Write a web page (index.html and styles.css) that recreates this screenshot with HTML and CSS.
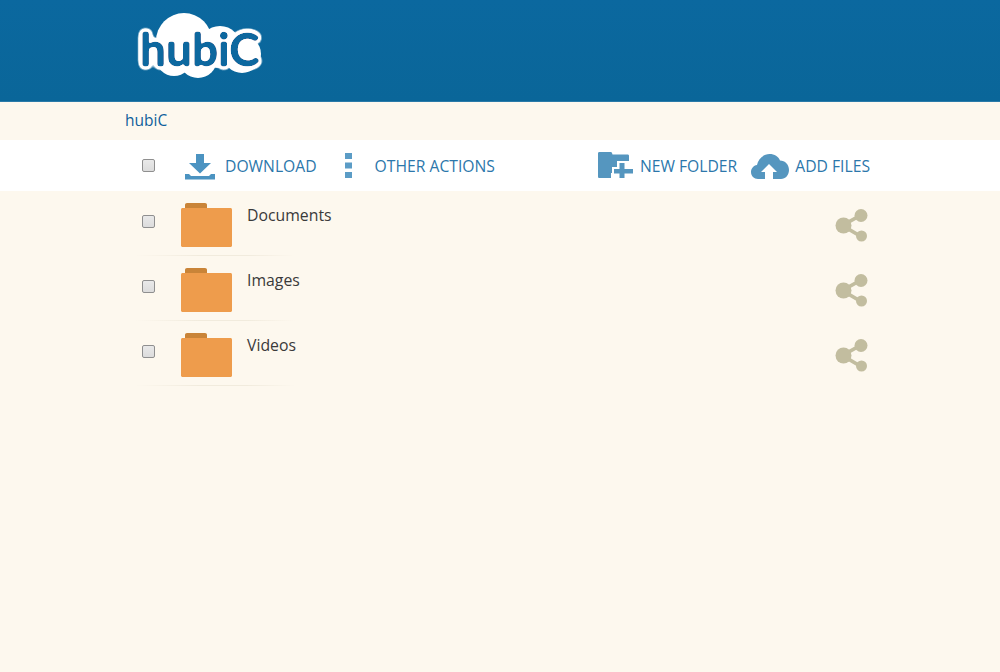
FILE: index.html
```html
<!DOCTYPE html>
<html lang="en">
<head>
    <meta charset="UTF-8">
    <title>hubiC</title>
    <link rel="stylesheet" href="styles.css">
</head>
<body>

<header class="top-bar">
    <div class="logo">
        <svg class="logo-art" width="130" height="70" viewBox="0 0 130 70">
            <defs>
                <filter id="logo-round" x="-10%" y="-30%" width="120%" height="160%">
                    <feGaussianBlur in="SourceAlpha" stdDeviation="1.2" result="soft"/>
                    <feComponentTransfer in="soft" result="core">
                        <feFuncA type="linear" slope="4" intercept="-1"/>
                    </feComponentTransfer>
                    <feGaussianBlur in="SourceAlpha" stdDeviation="3" result="wide-soft"/>
                    <feComponentTransfer in="wide-soft" result="halo">
                        <feFuncA type="linear" slope="16" intercept="-.6"/>
                    </feComponentTransfer>
                    <feFlood flood-color="#ffffff"/>
                    <feComposite in2="halo" operator="in" result="white"/>
                    <feFlood flood-color="#0c689f"/>
                    <feComposite in2="core" operator="in" result="blue"/>
                    <feMerge>
                        <feMergeNode in="white"/>
                        <feMergeNode in="blue"/>
                    </feMerge>
                </filter>
            </defs>
            <g fill="#fff">
                <circle cx="48" cy="30" r="28"/>
                <circle cx="84" cy="36" r="21"/>
                <circle cx="106" cy="43" r="19"/>
                <circle cx="62" cy="48" r="19"/>
                <circle cx="38" cy="47" r="18"/>
            </g>
            <text class="logo-text" x="4" y="55" filter="url(#logo-round)">hubiC</text>
        </svg>
    </div>
</header>

<div class="container breadcrumb">hubiC</div>

<div class="toolbar-band">
    <div class="container toolbar">
        <span class="check"></span>
        <a class="tool tool-download">
            <svg width="30" height="26" viewBox="0 0 30 26">
                <path fill="#4b93c1" d="M11 0h8v9h7l-11 10.500L4 9h7z"/>
                <path fill="#4b93c1" d="M0 20h4l2 2h18l2-2h4v5.500H0z"/>
            </svg>
            DOWNLOAD
        </a>
        <a class="tool tool-other">
            <svg width="7" height="25" viewBox="0 0 7 25">
                <path fill="#5b9cc6" d="M0 0h7v6H0zM0 9.500h7v6H0zM0 19h7v6H0z"/>
            </svg>
            OTHER ACTIONS
        </a>
        <a class="tool tool-folder">
            <svg width="36" height="27" viewBox="0 0 36 27">
                <path fill="#5596bf" d="M0 1.500C0 .5.500 0 1.500 0h11c1 0 1.500.5 2 2.500h15c1 0 1.500.5 1.500 1.500v5H19v6h-5v6h-1v5H1.500C.5 26 0 25.500 0 24.500z"/>
                <path fill="#5596bf" d="M21.500 11h5v6H35v4.500h-8.500V26h-5v-4.500H16V17h5.500z"/>
            </svg>
            NEW FOLDER
        </a>
        <a class="tool tool-add">
            <svg width="38" height="25" viewBox="0 0 38 25">
                <path fill="#5596bf" d="M7 25C3 25 0 22 0 18c0-3.500 2.500-6.500 6-7C7 5 12.500 0 18.500 0c5 0 9 2.500 10.500 6.500 5 0 9 4 9 9.500 0 5-3.500 9-8 9z"/>
                <path fill="#fff" d="M18 10l8 8h-4v7h-8v-7h-4z"/>
            </svg>
            ADD FILES
        </a>
    </div>
</div>

<div class="container file-list">
    <div class="file-row">
        <span class="check"></span>
        <svg class="folder" width="51" height="45" viewBox="0 0 51 45">
            <use href="#folder-shape"/>
        </svg>
        <span class="file-name">Documents</span>
        <svg class="share" width="33" height="33" viewBox="0 0 33 33">
            <use href="#share-shape"/>
        </svg>
    </div>
    <div class="file-row">
        <span class="check"></span>
        <svg class="folder" width="51" height="45" viewBox="0 0 51 45">
            <use href="#folder-shape"/>
        </svg>
        <span class="file-name">Images</span>
        <svg class="share" width="33" height="33" viewBox="0 0 33 33">
            <use href="#share-shape"/>
        </svg>
    </div>
    <div class="file-row">
        <span class="check"></span>
        <svg class="folder" width="51" height="45" viewBox="0 0 51 45">
            <use href="#folder-shape"/>
        </svg>
        <span class="file-name">Videos</span>
        <svg class="share" width="33" height="33" viewBox="0 0 33 33">
            <use href="#share-shape"/>
        </svg>
    </div>
</div>

<svg class="defs" width="0" height="0">
    <defs>
        <g id="folder-shape">
            <path fill="#c98438" d="M4 2c0-1.200.8-2 2-2h18c1.200 0 2 .8 2 2v5H4z"/>
            <path fill="#ee9c4c" d="M1.500 5h48c.8 0 1.500.7 1.500 1.500v36c0 .8-.7 1.500-1.500 1.500h-48C.7 44 0 43.300 0 42.500v-36C0 5.700.7 5 1.500 5z"/>
        </g>
        <g id="share-shape" fill="#c2bd9f">
            <path d="M8 14 26 4l2 3-17 9.500L27 26l-2 3L8 19z"/>
            <circle cx="8.500" cy="16.500" r="8"/>
            <circle cx="26" cy="6.500" r="6.500"/>
            <circle cx="26.500" cy="27" r="5.500"/>
        </g>
    </defs>
</svg>

</body>
</html>
```

FILE: styles.css
```css
body {
    margin: 0;
    background: #fdf8ee;
    font-family: "Open Sans", sans-serif;
    color: #3a3a3a;
}

a {
    color: #2c77ab;
}

.container {
    width: 750px;
    margin: 0 auto;
}

.defs {
    display: block;
}

.top-bar {
    height: 101px;
    background: linear-gradient(#0b689f, #0a6699);
    border-bottom: 1px solid #2a7aa8;
}

.logo {
    width: 750px;
    margin: 0 auto;
    padding: 11px 0 0 11px;
    box-sizing: border-box;
}

.logo-art {
    display: block;
}

.logo-text {
    font-family: Lato, sans-serif;
    font-weight: 700;
    font-size: 46px;
}

.breadcrumb {
    height: 38px;
    line-height: 36px;
    font-size: 15.500px;
    font-weight: 500;
    color: #0f5f9c;
}

.toolbar-band {
    background: #fff;
    height: 51px;
}

.toolbar {
    display: flex;
    align-items: center;
    height: 100%;
    padding-left: 17px;
    box-sizing: border-box;
}

.tool {
    display: flex;
    align-items: center;
    font-size: 15.700px;
    white-space: nowrap;
}

.tool-download {
    margin-left: 30px;
    gap: 10px;
}

.tool-download svg {
    margin-top: 2px;
}

.tool-other {
    margin-left: 28px;
    gap: 23px;
}

.tool-folder {
    margin-left: 103px;
    gap: 6px;
}

.tool-add {
    margin-left: 14px;
    gap: 6px;
}

.tool-add svg {
    margin-top: 2px;
}

.check {
    width: 13px;
    height: 13px;
    flex: none;
    border: 1px solid #8f8f8f;
    border-radius: 2px;
    background: linear-gradient(#e9e9e9, #dcdcdc);
    box-sizing: border-box;
}

.file-row {
    position: relative;
    display: flex;
    align-items: flex-start;
    height: 65px;
    padding: 12px 7px 0 17px;
    box-sizing: border-box;
}

.file-row::after {
    content: "";
    position: absolute;
    left: 10px;
    bottom: 0;
    width: 160px;
    height: 1px;
    background: linear-gradient(to right, #fdf8ee, #f1ebdd 40%, #f1ebdd 70%, #fdf8ee);
}

.file-row .check {
    margin-top: 12px;
}

.folder {
    margin-left: 26px;
}

.file-name {
    margin-left: 15px;
    font-size: 15.800px;
    line-height: 25px;
}

.share {
    margin-left: auto;
    margin-top: 6px;
}
```
